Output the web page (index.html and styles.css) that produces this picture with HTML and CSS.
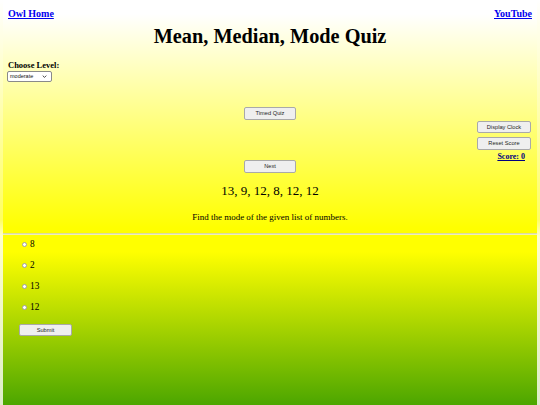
FILE: index.html
```html
<!DOCTYPE html>
<html lang="en">
<head>
<meta charset="utf-8">
<title>Mean, Median, Mode Quiz</title>
<link rel="stylesheet" href="styles.css">
</head>
<body>
<div class="sheet">
  <header class="top">
    <nav class="nav">
      <a class="nav-link" href="#">Owl Home</a>
      <a class="nav-link" href="#">YouTube</a>
    </nav>
    <h1 class="title">Mean, Median, Mode Quiz</h1>
    <div class="level">
      <div class="level-label">Choose Level:</div>
      <div class="select">
        <span class="select-text">moderate</span>
        <svg class="chevron" viewBox="0 0 8 5" width="5" height="3"><path d="M1 1 L4 4 L7 1" fill="none" stroke="#333" stroke-width="1.5"/></svg>
      </div>
    </div>
    <div class="controls">
      <div class="center-col">
        <button class="btn" type="button">Timed Quiz</button>
        <button class="btn next" type="button">Next</button>
      </div>
      <div class="right-col">
        <button class="btn wide" type="button">Display Clock</button>
        <button class="btn wide" type="button">Reset Score</button>
        <a class="score" href="#">Score: 0</a>
      </div>
    </div>
    <div class="numbers">13, 9, 12, 8, 12, 12</div>
    <p class="prompt">Find the mode of the given list of numbers.</p>
  </header>
  <div class="rule"></div>
  <form class="answers">
    <label class="option"><input class="radio" type="radio" name="a"><span>8</span></label>
    <label class="option"><input class="radio" type="radio" name="a"><span>2</span></label>
    <label class="option"><input class="radio" type="radio" name="a"><span>13</span></label>
    <label class="option"><input class="radio" type="radio" name="a"><span>12</span></label>
    <button class="btn submit" type="button">Submit</button>
  </form>
</div>
</body>
</html>
```

FILE: styles.css
```css
html, body {
  margin: 0;
  padding: 0;
}
body {
  width: 540px;
  height: 405px;
  overflow: hidden;
  font-family: "Liberation Serif", "Times New Roman", serif;
  color: #000;
  background: linear-gradient(to bottom, #ffffff 0px, #ffff60 220px, #ffffc8 236px, #dcedc8 405px);
}
.sheet {
  margin: 0 3px;
}
.top {
  padding: 8px 5px 0 5px;
  height: 225px;
  background: linear-gradient(to bottom, #ffffff 0px, #ffffff 14px, #ffff00 228px, #ffff00 233px);
}
.nav {
  display: flex;
  justify-content: space-between;
  line-height: 12px;
  height: 12px;
}
.nav-link {
  font-size: 10px;
  font-weight: bold;
  color: #0000ee;
  text-decoration: underline;
}
.title {
  margin: 4px 0 0 0;
  font-size: 20.3px;
  line-height: 24px;
  font-weight: bold;
  text-align: center;
}
.level {
  margin-top: 12px;
}
.level-label {
  font-size: 8.5px;
  line-height: 10px;
  font-weight: bold;
}
.select {
  margin: 1px 0 0 -1px;
  width: 41px;
  height: 9px;
  border: 1px solid #8a8a8a;
  border-radius: 2px;
  background: #fff;
  display: flex;
  align-items: center;
  justify-content: space-between;
  padding: 0 0 0 2px;
}
.select-text {
  font-family: "Liberation Sans", Arial, sans-serif;
  font-size: 5.5px;
  line-height: 9px;
  color: #111;
}
.chevron {
  margin-right: 4px;
}
.controls {
  margin-top: 25px;
  display: grid;
  grid-template-columns: 1fr 52px 1fr;
  align-items: start;
}
.center-col {
  grid-column: 2;
  display: flex;
  flex-direction: column;
}
.right-col {
  grid-column: 3;
  justify-self: end;
  margin-right: 1px;
  padding-top: 14px;
  display: flex;
  flex-direction: column;
  align-items: stretch;
}
.btn {
  box-sizing: border-box;
  width: 52px;
  height: 13px;
  padding: 0;
  margin: 0;
  border: 1px solid #a9a9a9;
  border-radius: 2px;
  background: #efefef;
  color: #1e1e1e;
  font-family: "Liberation Sans", Arial, sans-serif;
  font-size: 5.7px;
  line-height: 11px;
  text-align: center;
}
.next {
  margin-top: 40px;
}
.wide {
  width: 54px;
  height: 12px;
  line-height: 10px;
}
.wide + .wide {
  margin-top: 4px;
  height: 13px;
  line-height: 11px;
}
.score {
  margin-top: 2px;
  padding-right: 6px;
  text-align: right;
  font-size: 8px;
  line-height: 10px;
  font-weight: bold;
  color: #000080;
  text-decoration: underline;
}
.numbers {
  margin-top: 10px;
  font-size: 13px;
  line-height: 16px;
  text-align: center;
}
.prompt {
  margin: 13px 0 0 0;
  font-size: 9px;
  line-height: 11px;
  text-align: center;
}
.rule {
  height: 1px;
  border-bottom: 1px solid #eeeeb8;
  background: #dada9e;
}
.answers {
  margin: 0;
  min-height: 170px;
  box-sizing: border-box;
  padding: 0 0 0 16px;
  background: linear-gradient(to bottom, #ffff00 0%, #ffff00 10%, #4ca600 100%);
  display: flex;
  flex-direction: column;
  align-items: flex-start;
}
.option {
  display: flex;
  align-items: center;
  height: 18px;
  line-height: 18px;
  font-size: 9.3px;
}
.option + .option {
  margin-top: 3px;
}
.radio {
  -webkit-appearance: none;
  appearance: none;
  box-sizing: border-box;
  width: 5px;
  height: 5px;
  margin: 0 3.5px 0 2.5px;
  border: 1px solid #a0a0a0;
  border-radius: 50%;
  background: #fff;
}
.submit {
  margin-top: 8px;
  height: 12px;
  line-height: 10px;
  width: 53px;
}
```
